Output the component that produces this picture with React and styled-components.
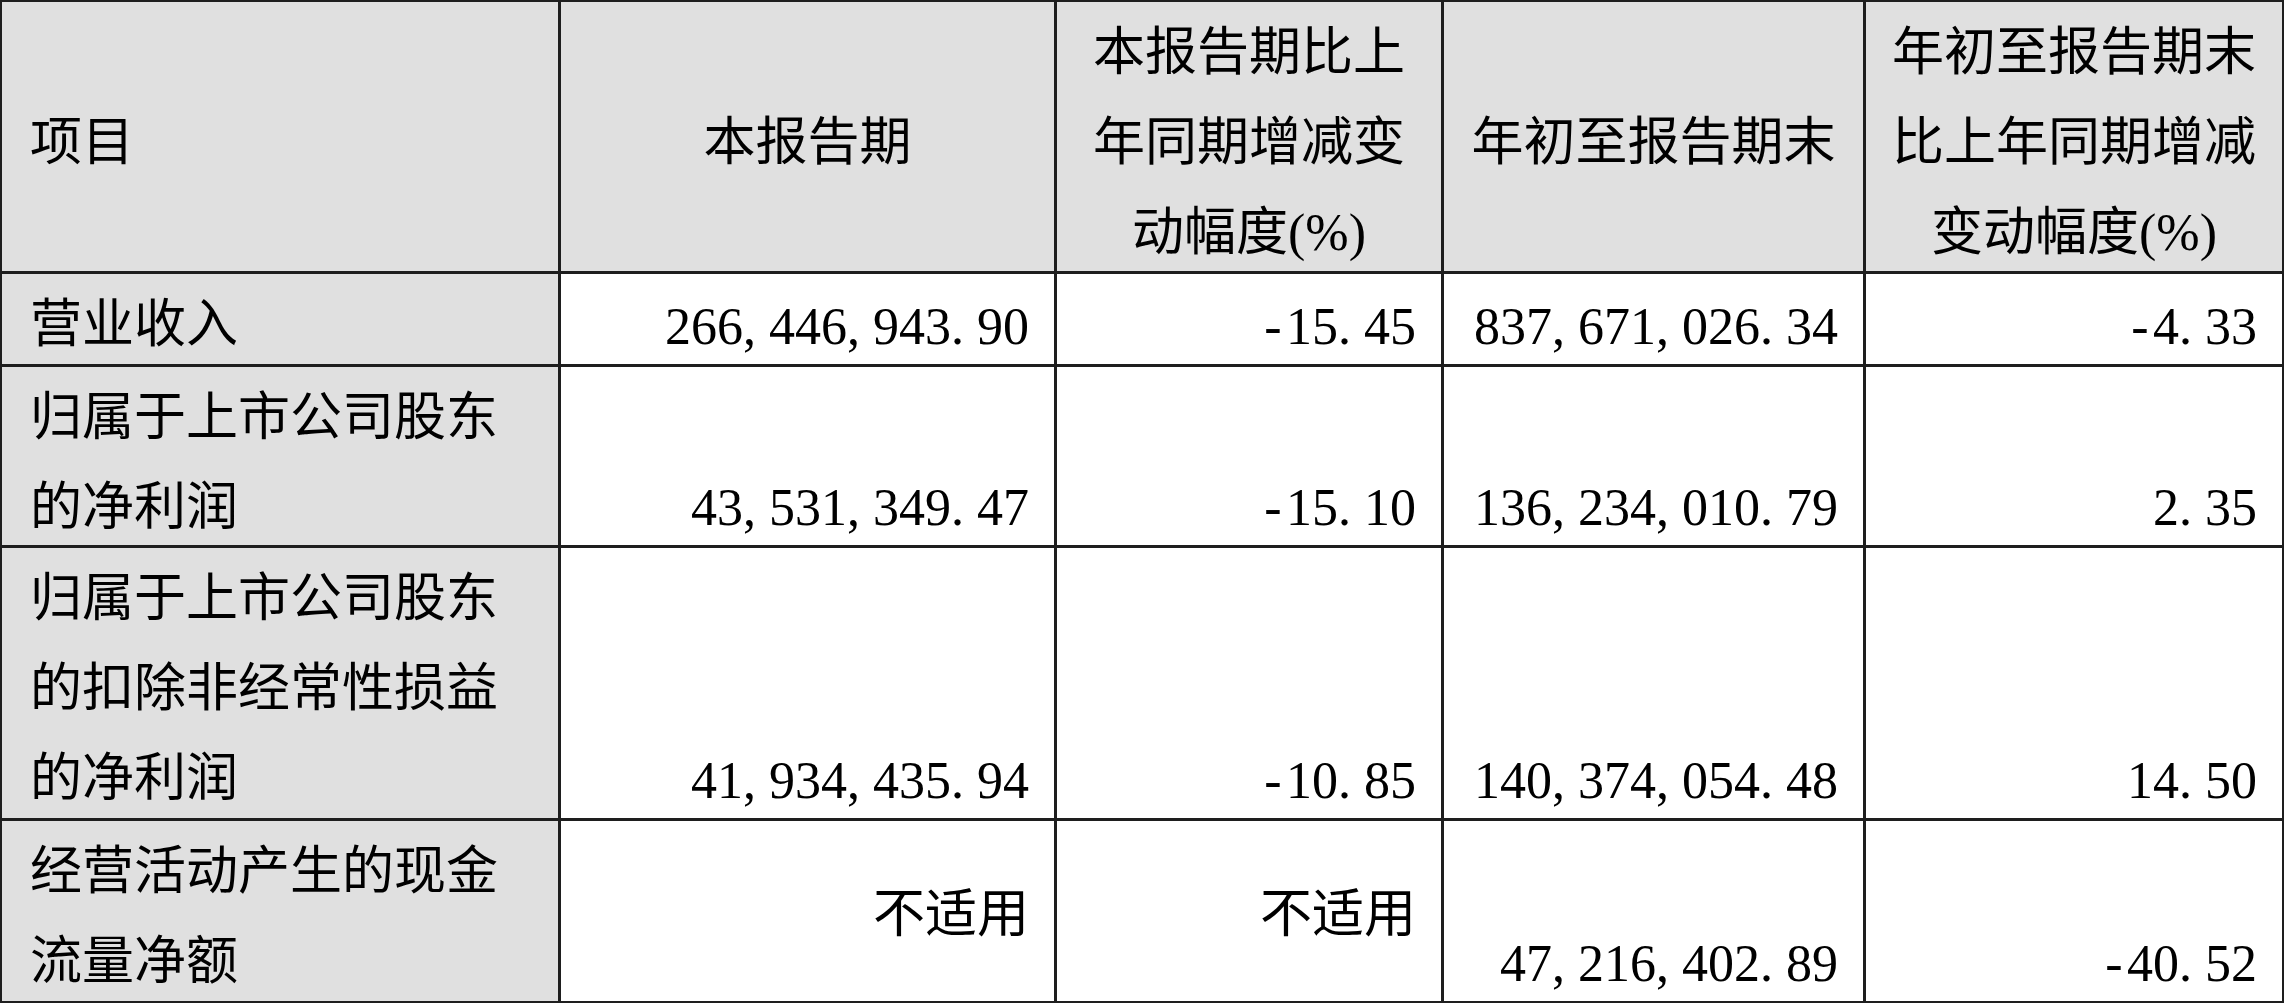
import { Fragment } from 'react'
import styled, { createGlobalStyle } from 'styled-components'

const GlobalStyle = createGlobalStyle`
    html, body {
        margin:0;
        padding:0;
        background:#fff;
    }
    body {
        font-family:"Liberation Serif", "Noto Sans CJK SC", serif;
        color:#000;
    }
`

const Sheet = styled.div`
    display:grid;
    width:fit-content;
    grid-template-columns:556px 493px 384px 419px 416px;
    grid-template-rows:269px 90px 178px 270px 180px;
    gap:3px;
    padding:2px;
    background:#1e1e1e;
    font-size:52px;
`

const Cell = styled.div`
    display:flex;
    flex-direction:column;
    background:${({$gray}) => $gray ? '#e0e0e0' : '#fff'};
    overflow:hidden;
    white-space:nowrap;
`

const HeadCell = styled(Cell)`
    justify-content:center;
    text-align:${({$align}) => $align || 'center'};
    padding:12px 0 0 ${({$align}) => $align === 'left' ? '28px' : '0'};
    line-height:90px;
`

const LabelCell = styled(Cell)`
    justify-content:flex-start;
    padding:6px 0 0 28px;
    line-height:90px;
`

const ValueCell = styled(Cell)`
    justify-content:${({$text}) => $text ? 'center' : 'flex-end'};
    text-align:right;
    padding:${({$text}) => $text ? '8px 25px 0 0' : '0 25px 7px 0'};
    line-height:${({$text}) => $text ? '90px' : '60px'};
`

const Ch = styled.span`
    display:inline-block;
    width:0.5em;
    text-align:${({$mid}) => $mid ? 'center' : 'left'};
`

const Num = ({value}) => (
    <span>
        {value.split('').map((c, i) => <Ch key={i} $mid={c === '-'}>{c}</Ch>)}
    </span>
)

const header = [
    {lines:['项目'], align:'left'},
    {lines:['本报告期']},
    {lines:['本报告期比上', '年同期增减变', '动幅度(%)']},
    {lines:['年初至报告期末']},
    {lines:['年初至报告期末', '比上年同期增减', '变动幅度(%)']},
]

const rows = [
    {label:['营业收入'], values:['266,446,943.90', '-15.45', '837,671,026.34', '-4.33']},
    {label:['归属于上市公司股东', '的净利润'], values:['43,531,349.47', '-15.10', '136,234,010.79', '2.35']},
    {label:['归属于上市公司股东', '的扣除非经常性损益', '的净利润'], values:['41,934,435.94', '-10.85', '140,374,054.48', '14.50']},
    {label:['经营活动产生的现金', '流量净额'], values:['不适用', '不适用', '47,216,402.89', '-40.52']},
]

const isNumber = (v) => /^[-\d,.]+$/.test(v)

const Lines = ({lines}) => lines.map((l, i) => <div key={i}>{l}</div>)

const App = () => {
    return (
        <>
            <GlobalStyle />
            <Sheet>
                {header.map((h, i) => (
                    <HeadCell key={'h' + i} $gray $align={h.align}>
                        <Lines lines={h.lines} />
                    </HeadCell>
                ))}
                {rows.map((r, ri) => (
                    <Fragment key={'r' + ri}>
                        <LabelCell $gray>
                            <Lines lines={r.label} />
                        </LabelCell>
                        {r.values.map((v, vi) => (
                            <ValueCell key={vi} $text={!isNumber(v)}>
                                {isNumber(v) ? <Num value={v} /> : <div>{v}</div>}
                            </ValueCell>
                        ))}
                    </Fragment>
                ))}
            </Sheet>
        </>
    )
}

export default App
